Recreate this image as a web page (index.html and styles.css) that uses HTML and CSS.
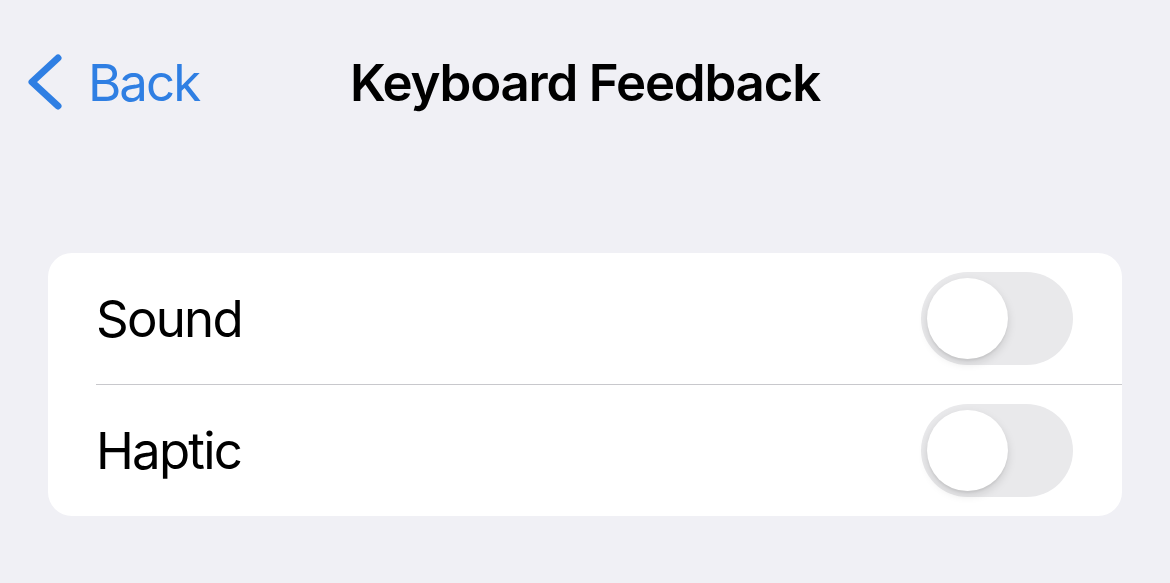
FILE: index.html
```html
<!DOCTYPE html>
<html lang="en">
<head>
    <meta charset="UTF-8">
    <meta name="viewport" content="width=device-width, initial-scale=1.0">
    <title>Keyboard Feedback</title>
    <link rel="stylesheet" href="styles.css">
</head>
<body>

    <header class="nav">
        <a class="back" href="#">
            <svg class="chevron" width="34" height="56" viewBox="0 0 34 56">
                <path d="M30 4 L4 28 L30 52" fill="none" stroke="currentColor" stroke-width="7" stroke-linecap="round" stroke-linejoin="round"/>
            </svg>
            <span>Back</span>
        </a>
        <h1 class="title">Keyboard Feedback</h1>
        <div></div>
    </header>

    <div class="group">
        <div class="row">
            <span class="label">Sound</span>
            <span class="switch"><span class="knob"></span></span>
        </div>
        <div class="row">
            <span class="label">Haptic</span>
            <span class="switch"><span class="knob"></span></span>
        </div>
    </div>

</body>
</html>
```

FILE: styles.css
```css
body {
    margin: 0;
    background-color: #f0f0f5;
    font-family: Inter, "Liberation Sans", Arial, sans-serif;
    color: #000;
}
.nav {
    display: grid;
    grid-template-columns: 1fr auto 1fr;
    align-items: center;
    height: 164px;
}
.back {
    display: flex;
    align-items: center;
    gap: 26px;
    padding-left: 28px;
    color: #2f7fe3;
    text-decoration: none;
    font-size: 51px;
    letter-spacing: -2px;
}
.chevron {
    display: block;
}
.title {
    margin: 0;
    font-size: 51px;
    font-weight: 600;
    letter-spacing: -1.2px;
}
.group {
    background: white;
    border-radius: 24px;
    margin: 89px 48px 0;
    overflow: hidden;
}
.row {
    display: flex;
    align-items: center;
    justify-content: space-between;
    height: 131px;
    padding: 0 49px 0 48px;
    position: relative;
}
.row + .row::before {
    content: "";
    position: absolute;
    top: -1px;
    left: 48px;
    right: 0;
    height: 1px;
    background: #c8c8cc;
}
.row + .row {
    margin-top: 1px;
}
.label {
    font-size: 51px;
    letter-spacing: -1.8px;
}
.switch {
    display: flex;
    align-items: center;
    width: 152px;
    height: 93px;
    border-radius: 47px;
    background: #e9e9eb;
    padding: 0 6px;
    box-sizing: border-box;
}
.knob {
    width: 81px;
    height: 81px;
    border-radius: 50%;
    background: white;
    box-shadow: 0 4px 10px rgba(0, 0, 0, 0.13), 0 2px 2px rgba(0, 0, 0, 0.05);
}
```
